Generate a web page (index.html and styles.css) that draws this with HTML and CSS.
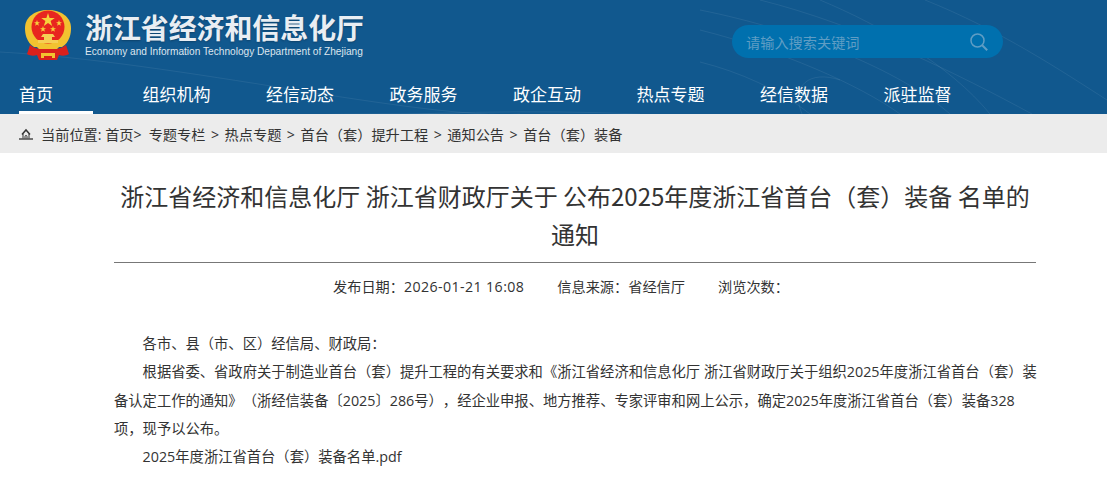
FILE: index.html
```html
<!DOCTYPE html>
<html lang="zh-CN">
  <head>
    <meta charset="utf-8">
    <title>浙江省经济和信息化厅</title>
    <link rel="stylesheet" href="styles.css">
  </head>
  <body>
    <section id="header">
      <svg class="arcs" width="1107" height="114" viewBox="0 0 1107 114" fill="none" stroke="#ffffff" stroke-opacity="0.07">
        <path d="M0 150C200 125 420 105 640 114"/>
        <path d="M0 137C160 118 300 112 460 114"/>
        <path d="M0 52C180 62 420 120 520 114"/>
        <path d="M700 30C780 50 860 85 900 114"/>
        <path d="M700 10C800 30 900 70 950 114"/>
        <path d="M760 0C860 25 960 75 1032 114"/>
        <path d="M820 0C880 25 950 65 990 114"/>
        <path d="M700 62C740 72 780 90 810 114"/>
        <path d="M802 114C790 85 810 70 840 80"/>
        <path d="M925 0C1000 30 1060 70 1107 100"/>
      </svg>
      <div class="top">
        <a class="brand" href="#">
          <svg class="emblem" width="48" height="52" viewBox="0 0 48 52">
            <path d="M10 38C2 33 1 24 1 19 1 8 11 1 24 1s23 7 23 18c0 5-1 14-9 19z" fill="#f2c230"/>
            <circle cx="24" cy="18" r="16.5" fill="#e8261f"/>
            <path d="M24 4l1.6 5h5.2l-4.200 3.100 1.600 5-4.200-3.100-4.200 3.100 1.600-5-4.200-3.100h5.200z" fill="#f7d23c"/>
            <path d="M13 11l.8 2.200h2.200l-1.800 1.300.7 2.200-1.900-1.300-1.900 1.300.7-2.200-1.800-1.300h2.200zM35 11l.8 2.200h2.200l-1.800 1.300.7 2.200-1.900-1.300-1.900 1.300.7-2.200-1.800-1.300h2.200zM19 17l.8 2.200H22l-1.800 1.300.7 2.200-1.900-1.300-1.900 1.300.7-2.200-1.800-1.300h2.200zM29 17l.8 2.200H32l-1.800 1.300.7 2.200-1.900-1.300-1.900 1.300.7-2.200-1.800-1.300h2.200z" fill="#f7d23c"/>
            <path d="M19 25h10l2 3h-3v3h6v3H14v-3h6v-3h-3z" fill="#f5cf55"/>
            <path d="M6 36c4 3 8 4 12 4h12c4 0 8-1 12-4l3 9c-3 2-7 2-10 1l-2 5H15l-2-5c-3 1-7 1-10-1z" fill="#d9201c"/>
            <path d="M12 37h24l-3 3H15zM17 44h14v5h-3v-2h-8v2h-3z" fill="#f2c230"/>
          </svg>
          <div class="brand-text">
            <h1>浙江省经济和信息化厅</h1>
            <p>Economy and Information Technology Department of Zhejiang</p>
          </div>
        </a>
        <form class="search">
          <span>请输入搜索关键词</span>
          <svg width="18" height="18" viewBox="0 0 18 18" fill="none" stroke="#5f9dc4" stroke-width="1.500">
            <circle cx="7.500" cy="7.500" r="6.500"/>
            <path d="M12.200 12.200l5 5" stroke-width="2"/>
          </svg>
        </form>
      </div>
      <ul class="menu">
        <li class="on"><a href="#">首页</a></li>
        <li><a href="#">组织机构</a></li>
        <li><a href="#">经信动态</a></li>
        <li><a href="#">政务服务</a></li>
        <li><a href="#">政企互动</a></li>
        <li><a href="#">热点专题</a></li>
        <li><a href="#">经信数据</a></li>
        <li><a href="#">派驻监督</a></li>
      </ul>
    </section>

    <section id="crumbs">
      <svg width="14" height="12" viewBox="0 0 14 12" fill="none" stroke="#333333">
        <path d="M3 6.500L7 2l4 4.500" stroke-width="1.500"/>
        <path d="M4 6v4.500M10 6v4.500M6 10.500V8.500a1 1 0 0 1 2 0v2"/>
        <path d="M0 11h14" stroke-width="1.300"/>
      </svg>
      <span>当前位置: 首页<span class="sep first">&gt;</span>专题专栏<span class="sep">&gt;</span>热点专题<span class="sep">&gt;</span>首台（套）提升工程<span class="sep">&gt;</span>通知公告<span class="sep">&gt;</span>首台（套）装备</span>
    </section>

    <section id="content">
      <h2>浙江省经济和信息化厅 浙江省财政厅关于 公布2025年度浙江省首台（套）装备 名单的通知</h2>
      <div class="meta">
        <span>发布日期：<span class="time">2026-01-21 16:08</span></span>
        <span>信息来源：省经信厅</span>
        <span>浏览次数：</span>
      </div>
      <div class="entry-content">
        <p>各市、县（市、区）经信局、财政局：</p>
        <p>根据省委、省政府关于制造业首台（套）提升工程的有关要求和《浙江省经济和信息化厅 浙江省财政厅关于组织2025年度浙江省首台（套）装备认定工作的通知》（浙经信装备〔2025〕286号），经企业申报、地方推荐、专家评审和网上公示，确定2025年度浙江省首台（套）装备328项，现予以公布。</p>
        <p>2025年度浙江省首台（套）装备名单.pdf</p>
      </div>
    </section>
  </body>
</html>
```

FILE: styles.css
```css
* {
  margin:0;
  padding:0;
  box-sizing:border-box;
}

body {
  font-family:"Open Sans", "Noto Sans CJK SC", sans-serif;
  font-size:14px;
  color:#333;
  background:#fff;
  text-spacing-trim:space-all;
}

a {
  color:inherit;
  text-decoration:none;
}

#header {
  position:relative;
  height:114px;
  background:#11588e;
  overflow:hidden;
}

.arcs {
  position:absolute;
  left:0;
  top:0;
}

.top {
  position:relative;
  display:flex;
  justify-content:space-between;
  height:76px;
  padding:9px 104px 0 24px;
}

.brand {
  display:flex;
  gap:13px;
  color:#fff;
}

.brand h1 {
  font-family:"Noto Sans CJK SC", sans-serif;
  font-size:27.900px;
  line-height:36px;
  font-weight:700;
  color:#e9eef3;
  text-shadow:0 1px 2px rgba(0,0,0,.25);
  white-space:nowrap;
}

.brand p {
  font-family:"Liberation Sans", sans-serif;
  font-size:10.150px;
  line-height:13px;
  color:#dde6ee;
  white-space:nowrap;
}

.search {
  display:flex;
  align-items:center;
  justify-content:space-between;
  width:271px;
  height:33px;
  margin-top:16px;
  padding:0 15px 0 14px;
  border-radius:17px;
  background:#0070ae;
  color:#5f9dc4;
  font-size:14.200px;
}

.menu {
  position:relative;
  display:flex;
  gap:49.500px;
  padding-left:19px;
  list-style:none;
}

.menu li {
  width:74px;
  height:38px;
  color:#fff;
  font-family:"Noto Sans CJK SC", sans-serif;
  font-size:17px;
  line-height:36px;
  white-space:nowrap;
}

.menu .on {
  border-bottom:3px solid #fff;
}

#crumbs {
  display:flex;
  align-items:center;
  gap:8px;
  height:39px;
  padding-left:19px;
  background:#ececec;
  font-size:14.200px;
  color:#333;
}

.sep {
  margin:0 5.500px;
}

.sep.first {
  margin:0 7px 0 0;
}

#content {
  padding:0 71px 0 114px;
}

#content h2 {
  padding:24px 0 9px;
  border-bottom:1px solid #777;
  font-family:"Noto Sans CJK SC", sans-serif;
  font-size:24px;
  line-height:38px;
  font-weight:400;
  text-align:center;
}

.meta {
  display:flex;
  justify-content:center;
  gap:33px;
  height:67px;
  padding:13px 28px 0 0;
  font-size:14.200px;
  line-height:22px;
}

.time {
  letter-spacing:.4px;
}

.entry-content {
  margin-right:-2px;
}

.entry-content p {
  font-size:14.300px;
  line-height:28.300px;
  text-indent:2em;
}
```
